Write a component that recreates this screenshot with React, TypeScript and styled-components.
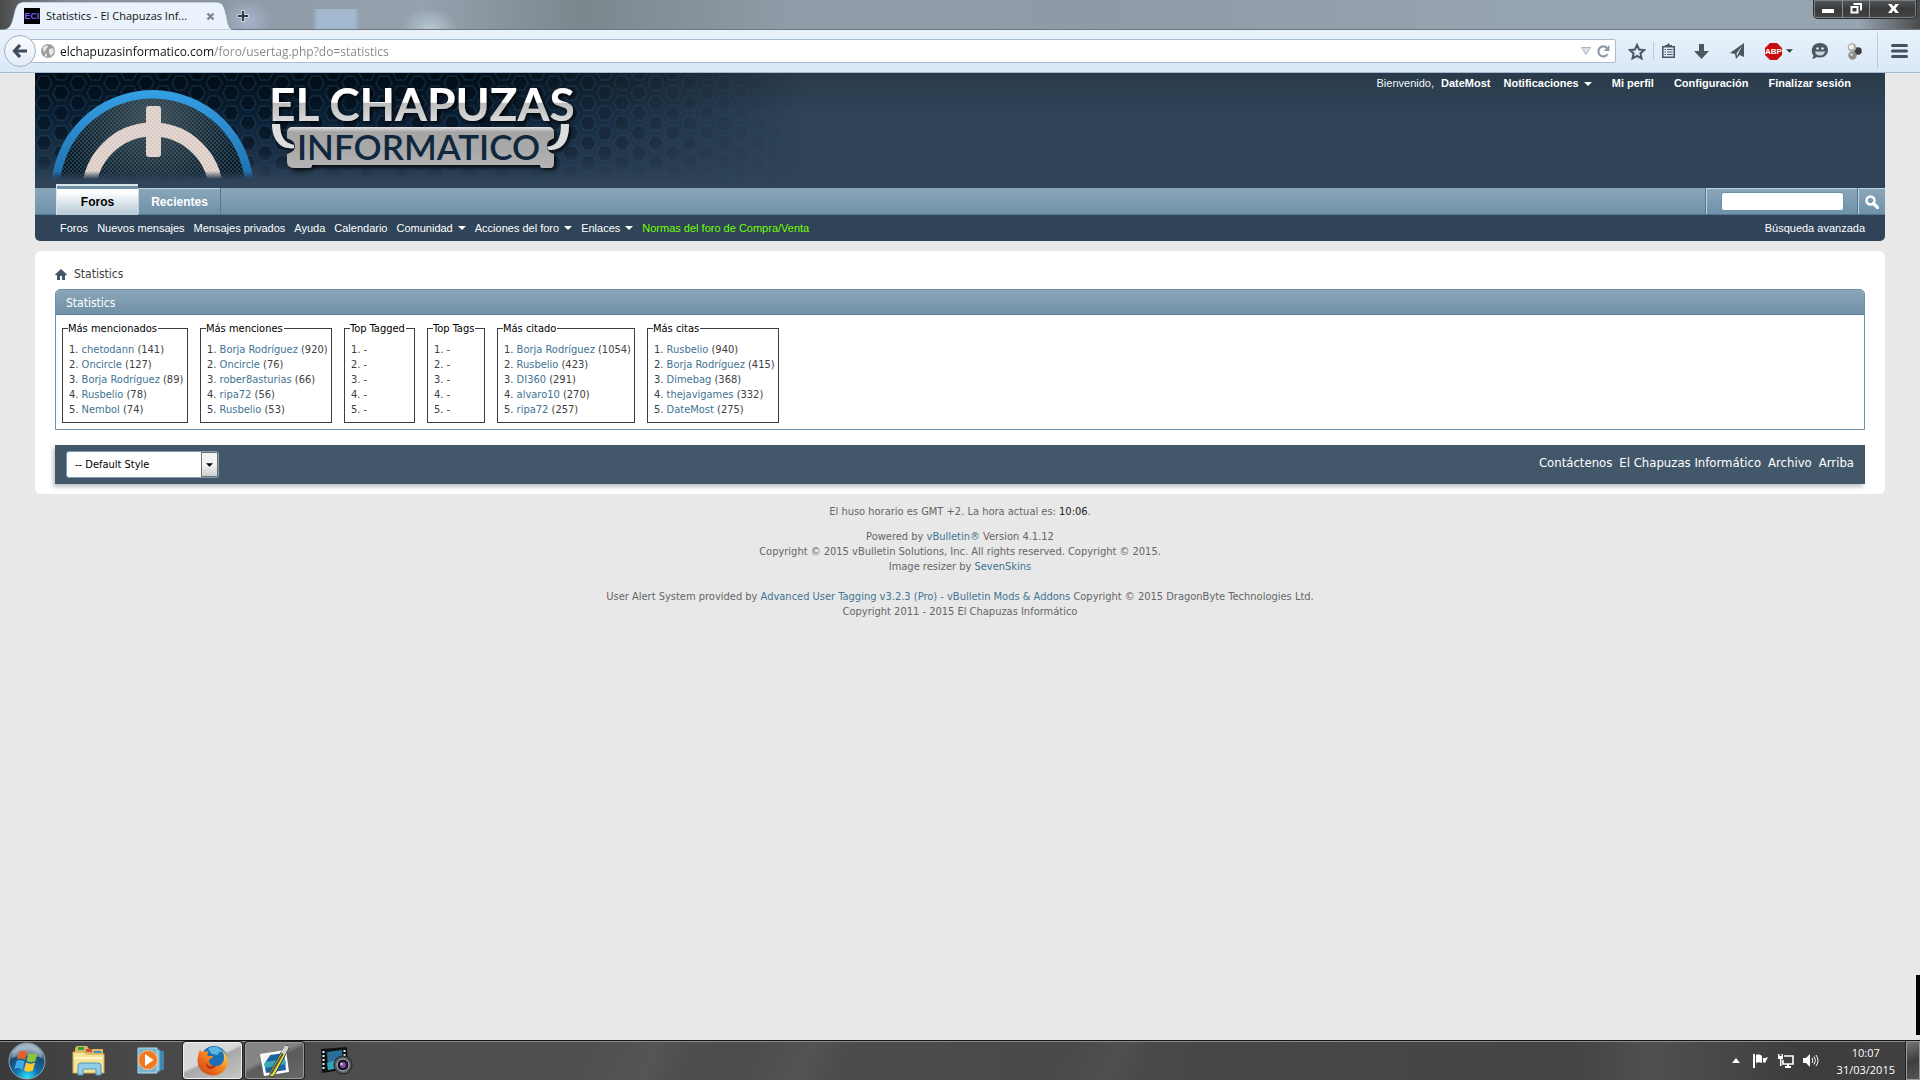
import React from 'react';
import styled, { createGlobalStyle } from 'styled-components';

const tahoma = '"DejaVu Sans Condensed", "Noto Sans", sans-serif';
const segoe = '"Open Sans", "Noto Sans", sans-serif';
const arial = '"Liberation Sans", Arial, sans-serif';

const GlobalStyle = createGlobalStyle`
  * { box-sizing: border-box; }
  body { margin: 0; background: #e8e8e8; color: #3e3e3e; font: 11px/15px ${tahoma}; }
  button { border: 0; padding: 0; background: none; color: inherit; font: inherit; }
  a { text-decoration: none; }
  svg { display: block; }
`;

const Desktop = styled.div`
  display: flex;
  flex-direction: column;
  min-height: 100vh;
`;

/* Browser window */

const TitleBar = styled.header`
  display: flex;
  align-items: flex-start;
  height: 30px;
  border-bottom: 1px solid #6b7781;
  background:
    radial-gradient(ellipse 26px 22px at 248px 20px, #a6b3cc 0, transparent 100%),
    linear-gradient(90deg, transparent 312px, #a3b9cf 318px, #a3b9cf 354px, transparent 360px) 0 9px no-repeat,
    radial-gradient(ellipse 28px 20px at 430px 28px, #b3c3cd 10%, transparent 100%),
    linear-gradient(90deg, #4b4b4b 0, #87929c 70px, #95a2ae 420px, #7c868d 580px, #909ca8 800px, #8e9aa5 1100px, #96a3b0 1500px, #96a3b0 calc(100% - 60px), #4a4a4a 100%);
`;
const Tab = styled.div`
  display: grid;
  flex: none;
  width: 234px;
  height: 30px;
  > * { grid-area: 1 / 1; }
`;
const TabContent = styled.div`
  display: flex;
  align-items: center;
  gap: 6px;
  height: 32px;
  padding: 0 19px 0 24px;
  color: #111;
  font: 11px/16px ${segoe};
`;
const Favicon = styled.span`
  width: 16px;
  height: 16px;
  background: #000;
  color: #7560ff;
  font: bold 9px/16px ${arial};
  text-align: center;
`;
const TabTitle = styled.span`
  flex: 1;
  white-space: nowrap;
`;
const NewTab = styled.button`
  height: 30px;
  padding: 2px 0 0 3px;
`;
const WindowButtons = styled.div`
  display: flex;
  width: 104px;
  height: 19px;
  margin: 0 3px 0 auto;
  border: 1px solid #2b2f33;
  border-top: 0;
  border-radius: 0 0 5px 5px;
  box-shadow: inset 0 0 0 1px #7b8085;
  background: linear-gradient(#55585b, #3a3a3a 50%, #444);
`;
const WindowButton = styled.button<{ $grow: number }>`
  display: grid;
  place-items: center;
  flex: ${p => p.$grow};
  padding-bottom: 2px;
  & + & { border-left: 1px solid #8b8f93; }
`;
const Toolbar = styled.div`
  display: flex;
  align-items: center;
  height: 43px;
  padding-left: 4px;
  border-bottom: 1px solid #a2bad4;
  background: linear-gradient(#e9f2fb, #dae8f8);
`;
const BackButton = styled.button`
  z-index: 1;
  display: grid;
  place-items: center;
  width: 32px;
  height: 32px;
  margin-right: -6px;
  border: 1px solid #a0b0c4;
  border-radius: 50%;
  background: linear-gradient(#fafcfe, #e3edf8);
`;
const AddressBar = styled.div`
  display: flex;
  flex: 1;
  align-items: center;
  height: 24px;
  padding: 0 5px 0 10px;
  border: 1px solid #aabccf;
  border-radius: 2px;
  background: #fff;
`;
const AddressInput = styled.input`
  flex: 1;
  height: 22px;
  margin: 0 5px;
  padding: 0;
  border: 0;
  outline: 0;
  background: linear-gradient(90deg, #111 154px, #858585 154px);
  background-clip: text;
  color: transparent;
  font: 12px/20px ${segoe};
`;
const ToolGroup = styled.div`
  display: flex;
  align-items: center;
  gap: 18px;
  height: 42px;
  padding: 0 12px 0 12px;
`;
const ToolButton = styled.button`
  display: flex;
  align-items: center;
  gap: 4px;
`;
const ToolDivider = styled.span<{ $tall?: boolean }>`
  width: 1px;
  height: ${p => (p.$tall ? 36 : 18)}px;
  margin: 0 ${p => (p.$tall ? -5 : -11)}px;
  background: #b9cadb;
`;

/* Forum page */

const Page = styled.div`
  flex: 1;
  padding: 0 35px;
`;
const Masthead = styled.header`
  display: flex;
  align-items: flex-start;
  justify-content: space-between;
  height: 115px;
  background: linear-gradient(#2a3a49, #2f4459 40px);
`;
const UserMenu = styled.nav`
  display: flex;
  gap: 20px;
  padding: 4px 34px 0 0;
  color: #f4f7f9;
  font: 11px/13px ${arial};
`;
const UserGroup = styled.span`
  display: flex;
  gap: 13px;
`;
const Welcome = styled.span`
  display: flex;
  gap: 7px;
`;
const UserLink = styled.a`
  display: flex;
  align-items: center;
  gap: 5px;
  color: #fff;
  font-weight: bold;
`;
const NavBar = styled.nav`
  display: flex;
  height: 27px;
  padding-left: 21px;
  border-bottom: 1px solid #56788f;
  background: linear-gradient(#8ba6ba, #6e92a9);
`;
const NavTab = styled.a<{ $active?: boolean }>`
  display: grid;
  place-items: center;
  width: 82px;
  height: ${p => (p.$active ? 31 : 26)}px;
  margin-top: ${p => (p.$active ? -4 : 0)}px;
  padding-top: ${p => (p.$active ? 4 : 1)}px;
  border: solid ${p => (p.$active ? '#dbe5ec' : '#c3d2dd')};
  border-width: ${p => (p.$active ? '2px 0 0 1px' : '1px 0 0 1px')};
  box-shadow: ${p => (p.$active ? 'inset 0 3px #7193a9' : '1px 0 #56788f')};
  background: ${p => (p.$active ? 'linear-gradient(#fff 20%, #b3c8d4)' : 'none')};
  color: ${p => (p.$active ? '#000' : '#fff')};
  font: bold 12px/15px ${arial};
`;
const SearchForm = styled.form`
  display: flex;
  margin-left: auto;
`;
const SearchField = styled.label`
  display: grid;
  align-items: center;
  width: 152px;
  padding: 0 14px;
  border: solid #c3d2dd;
  border-width: 1px 0 0 1px;
  box-shadow: -1px 0 #56788f;
`;
const SearchInput = styled.input`
  width: 100%;
  height: 19px;
  padding: 0 4px;
  border: 1px solid #6b91ab;
  border-radius: 3px;
  background: #fff;
`;
const SearchButton = styled.button`
  display: grid;
  place-items: center;
  width: 27px;
  border: solid #c3d2dd;
  border-width: 1px 0 0 1px;
  box-shadow: -1px 0 #56788f;
`;
const SubNav = styled.nav`
  display: flex;
  align-items: center;
  gap: 9px;
  height: 26px;
  padding: 0 20px 0 25px;
  border-radius: 0 0 5px 5px;
  background: #2f4459;
  font: 11px/14px ${arial};
`;
const SubLink = styled.a<{ $accent?: boolean; $end?: boolean }>`
  display: flex;
  align-items: center;
  gap: 5px;
  margin-left: ${p => (p.$end ? 'auto' : '0')};
  color: ${p => (p.$accent ? '#6fff00' : '#fff')};
`;
const Main = styled.main`
  margin-top: 10px;
  padding: 16px 20px 10px;
  border-radius: 6px;
  background: #fff;
`;
const Breadcrumb = styled.nav`
  display: flex;
  align-items: center;
  gap: 7px;
  height: 15px;
  margin-bottom: 7px;
  color: #3e3e3e;
  font-size: 12px;
`;
const Block = styled.section`
  border: 1px solid #6b91ab;
  border-radius: 5px 5px 0 0;
`;
const BlockHead = styled.h2`
  margin: 0;
  padding: 6px 10px 3px;
  border-bottom: 1px solid #56809b;
  border-radius: 4px 4px 0 0;
  background: linear-gradient(#8ba6b8, #7091a8);
  color: #fff;
  font: 12px/15px ${tahoma};
`;
const BlockBody = styled.div`
  display: flex;
  gap: 12px;
  padding: 6px;
`;
const RankBox = styled.fieldset<{ $width: number }>`
  min-width: ${p => p.$width}px;
  margin: 0;
  padding: 6px 2px 5px 5px;
  border: 1px solid #3e3e3e;
`;
const RankTitle = styled.legend`
  padding: 0 1px 0 0;
  color: #000;
  white-space: nowrap;
`;
const RankList = styled.ol`
  margin: 0;
  padding: 0 0 0 1px;
  list-style: none;
  white-space: nowrap;
`;
const TextLink = styled.a`
  color: #417394;
`;
const FooterBar = styled.footer`
  display: flex;
  align-items: center;
  justify-content: space-between;
  height: 39px;
  margin-top: 15px;
  padding: 0 11px;
  box-shadow: -2px 3px 4px #c5c5c5;
  background: #43576b;
`;
const StyleChooser = styled.label`
  display: grid;
  width: 153px;
  > * { grid-area: 1 / 1; }
`;
const StyleSelect = styled.select`
  appearance: none;
  height: 27px;
  padding: 0 20px 0 8px;
  border: 1px solid #7b9cb4;
  border-radius: 3px;
  background: #fff;
  color: #000;
  font: 11px/15px ${tahoma};
`;
const SelectArrow = styled.span`
  display: grid;
  place-items: center;
  justify-self: end;
  width: 17px;
  margin: 1px;
  border: 1px solid #707070;
  background: linear-gradient(#f3f3f3 50%, #cfcfcf);
  pointer-events: none;
`;
const FooterLinks = styled.nav`
  display: flex;
  gap: 7px;
  padding-bottom: 4px;
  font-size: 13px;
`;
const FooterLink = styled.a`
  color: #fff;
`;
const Credits = styled.div`
  padding-top: 10px;
  color: #666;
  text-align: center;
`;
const CreditText = styled.p`
  margin: 0 0 10px;
`;
const Time = styled.time`
  color: #222;
`;
const SideGadget = styled.div`
  position: fixed;
  right: 0;
  bottom: 45px;
  width: 4px;
  height: 60px;
  background: #050505;
`;

/* Taskbar */

const Taskbar = styled.footer`
  display: flex;
  align-items: stretch;
  height: 40px;
  border-top: 1px solid #141414;
  box-shadow: inset 0 1px #8d8d8d;
  background:
    linear-gradient(115deg, transparent 30%, #5b5b5b88 34%, transparent 36%, transparent 39%, #5a5a5a88 42%, transparent 44%, transparent 55%, #55555588 58%, transparent 60%),
    linear-gradient(90deg, #3a3a3a, #474747 5%, #505050 25%, #484848 60%, #444 82%, #505050 86%, #3d3d3d 94%, #414141);
`;
const StartButton = styled.button`
  display: grid;
  place-items: center;
  width: 57px;
  padding-right: 3px;
`;
const TaskButton = styled.button<{ $state?: 'active' | 'open' }>`
  display: grid;
  place-items: center;
  width: 59px;
  margin: 1px 1px 1px 2px;
  border: 1px solid ${p => (p.$state === 'active' ? '#f2f2f2' : p.$state ? '#9a9a9a' : 'transparent')};
  border-radius: 3px;
  box-shadow: ${p => (p.$state ? '0 0 0 1px #222' : 'none')};
  background: ${p =>
    p.$state === 'active'
      ? 'linear-gradient(155deg, #d8d8d8 45%, #a9a9a9 50%, #c5c5c5)'
      : p.$state
        ? 'linear-gradient(155deg, #858585 40%, #5c5c5c 50%, #686868)'
        : 'none'};
`;
const Tray = styled.div`
  display: flex;
  align-items: center;
  gap: 9px;
  margin-left: auto;
`;
const Clock = styled.div`
  padding: 0 2px 0 9px;
  color: #fff;
  font: 11px/17px ${segoe};
  text-align: center;
`;
const ShowDesktop = styled.button`
  width: 14px;
  height: 39px;
  border: 1px solid #999;
  box-shadow: -1px 0 #222;
  background: linear-gradient(160deg, #777, #3e3e3e 50%, #555);
`;

const Caret = ({ color = '#fff', w = 8 }: { color?: string; w?: number }) => (
  <svg width={w} height="4" viewBox="0 0 8 4" aria-hidden="true"><path d="M0 0h8L4 4z" fill={color} /></svg>
);

const SiteLogo = () => (
  <svg width="770" height="115" viewBox="0 0 770 115" role="img" aria-label="El Chapuzas Informatico">
    <defs>
      <pattern id="hex" width="34" height="20" patternUnits="userSpaceOnUse">
        <g fill="#010b15" fillOpacity=".5" stroke="#38597a" strokeOpacity=".3" strokeWidth="1.500">
          <path d="M5 3h8l4 7-4 7H5l-4-7z" />
          <path d="M22-7h8l4 7-4 7h-8l-4-7z" />
          <path d="M22 13h8l4 7-4 7h-8l-4-7z" />
        </g>
      </pattern>
      <linearGradient id="night" x1="0" y1="0" x2="0" y2="1">
        <stop offset="0" stopColor="#020d18" /><stop offset=".4" stopColor="#0a2238" /><stop offset=".75" stopColor="#1d334a" /><stop offset=".95" stopColor="#2f4459" />
      </linearGradient>
      <linearGradient id="fadeX"><stop offset=".58" stopColor="#fff" /><stop offset="1" stopColor="#000" /></linearGradient>
      <linearGradient id="fadeY" x1="0" y1="0" x2="0" y2="1"><stop offset=".6" stopColor="#fff" /><stop offset=".93" stopColor="#000" /></linearGradient>
      <linearGradient id="fadeLogo" gradientUnits="userSpaceOnUse" x1="0" y1="98" x2="0" y2="106"><stop offset="0" stopColor="#fff" /><stop offset="1" stopColor="#000" /></linearGradient>
      <mask id="mx"><rect width="770" height="115" fill="url(#fadeX)" /></mask>
      <mask id="my"><rect width="770" height="115" fill="url(#fadeY)" /></mask>
      <mask id="ml"><rect width="770" height="115" fill="url(#fadeLogo)" /></mask>
      <linearGradient id="blue" x1="0" y1="0" x2="0" y2="1"><stop offset="0" stopColor="#35a0e6" /><stop offset=".5" stopColor="#1d69a6" /></linearGradient>
      <radialGradient id="dial" cx=".5" cy=".1" r=".5"><stop offset="0" stopColor="#47494b" /><stop offset="1" stopColor="#10171d" /></radialGradient>
      <pattern id="mesh" width="4" height="4" patternUnits="userSpaceOnUse"><path d="M0 0l4 4M4 0L0 4" stroke="#2d7da9" strokeWidth=".6" strokeOpacity=".7" /></pattern>
      <pattern id="meshWarm" width="4" height="4" patternUnits="userSpaceOnUse"><rect width="4" height="4" fill="#dedada" /><path d="M0 0l4 4M4 0L0 4" stroke="#e5a585" strokeWidth=".5" strokeOpacity=".7" /></pattern>
      <linearGradient id="chrome" gradientUnits="userSpaceOnUse" x1="0" y1="14" x2="0" y2="50">
        <stop offset="0" stopColor="#fff" /><stop offset=".42" stopColor="#fff" /><stop offset=".46" stopColor="#bdbdbd" /><stop offset="1" stopColor="#dedede" />
      </linearGradient>
      <linearGradient id="plate" x1="0" y1="0" x2="0" y2="1">
        <stop offset="0" stopColor="#e6e3e6" /><stop offset=".12" stopColor="#a5a5a5" /><stop offset=".6" stopColor="#aaa" /><stop offset="1" stopColor="#b5b5b5" />
      </linearGradient>
      <filter id="drop" x="-10%" y="-20%" width="120%" height="150%"><feDropShadow dx="2" dy="2" stdDeviation="2" floodColor="#000" floodOpacity=".9" /></filter>
    </defs>
    <g mask="url(#mx)">
      <rect width="770" height="115" fill="url(#night)" />
      <rect width="770" height="115" fill="url(#hex)" mask="url(#my)" />
    </g>
    <g mask="url(#ml)">
      <circle cx="117.500" cy="118.500" r="101.500" fill="url(#blue)" />
      <circle cx="117.500" cy="118.500" r="93" fill="url(#dial)" />
      <circle cx="117.500" cy="118.500" r="93" fill="url(#mesh)" />
      <circle cx="117.500" cy="120" r="63.500" fill="none" stroke="url(#meshWarm)" strokeWidth="14" />
      <rect x="111" y="33" width="15" height="51" rx="3" fill="url(#meshWarm)" />
    </g>
    <g filter="url(#drop)">
      <path d="M237 51h8c0 12 4 19 14 21v3c-14 2-22-9-22-24zM526 51h8c0 16-5 26-20 26l-2-3c10-1 14-8 14-23z" fill="#dedede" />
      <path d="M257 54h257a5 5 0 0 1 5 5v6c-4 2-7 3-7 8s3 7 7 8v8q0 6-4 6h-7q-3 0-3-3H277q0 3-3 3h-13q-9 0-9-6v-8c4-1 8-3 8-8s-4-6-8-8v-6a5 5 0 0 1 5-5z" fill="url(#plate)" />
      <text x="234" y="48" fontFamily="Lato" fontWeight="700" fontSize="46" fill="url(#chrome)">EL CHAPUZAS</text>
    </g>
    <text x="262" y="87" fontFamily="Lato" fontWeight="600" fontSize="35" fill="#10283d">INFORMATICO</text>
  </svg>
);

type Entry = [string, number] | null;
const blank: Entry[] = [null, null, null, null, null];
const rankings: { title: string; width: number; entries: Entry[] }[] = [
  { title: 'Más mencionados', width: 126, entries: [['chetodann', 141], ['Oncircle', 127], ['Borja Rodríguez', 89], ['Rusbelio', 78], ['Nembol', 74]] },
  { title: 'Más menciones', width: 132, entries: [['Borja Rodríguez', 920], ['Oncircle', 76], ['rober8asturias', 66], ['ripa72', 56], ['Rusbelio', 53]] },
  { title: 'Top Tagged', width: 71, entries: blank },
  { title: 'Top Tags', width: 58, entries: blank },
  { title: 'Más citado', width: 138, entries: [['Borja Rodríguez', 1054], ['Rusbelio', 423], ['DI360', 291], ['alvaro10', 270], ['ripa72', 257]] },
  { title: 'Más citas', width: 132, entries: [['Rusbelio', 940], ['Borja Rodríguez', 415], ['Dimebag', 368], ['thejavigames', 332], ['DateMost', 275]] },
];

const subLinks: { label: string; menu?: boolean; accent?: boolean }[] = [
  { label: 'Foros' },
  { label: 'Nuevos mensajes' },
  { label: 'Mensajes privados' },
  { label: 'Ayuda' },
  { label: 'Calendario' },
  { label: 'Comunidad', menu: true },
  { label: 'Acciones del foro', menu: true },
  { label: 'Enlaces', menu: true },
  { label: 'Normas del foro de Compra/Venta', accent: true },
];

const Browser = () => (
  <>
    <TitleBar>
      <Tab>
        <svg width="234" height="30" viewBox="0 0 234 30" aria-hidden="true">
          <path d="M0 30c9 0 11-4 13-12l2-8c2-6 4-8 10-8h190c6 0 8 2 10 8l2 8c1 8 3 12 7 12z" fill="#eaf2fb" stroke="#77838e" strokeOpacity=".6" />
        </svg>
        <TabContent>
          <Favicon aria-hidden="true">ECI</Favicon>
          <TabTitle>Statistics - El Chapuzas Inf...</TabTitle>
          <button type="button" aria-label="Cerrar pestaña">
            <svg width="9" height="9" viewBox="0 0 9 9"><path d="M1.500 1.500l6 6m0-6l-6 6" stroke="#7d8791" strokeWidth="2.400" /></svg>
          </button>
        </TabContent>
      </Tab>
      <NewTab type="button" aria-label="Nueva pestaña">
        <svg width="12" height="12" viewBox="0 0 12 12"><path d="M6 0v12M0 6h12" stroke="#f1f4f7" strokeWidth="4" opacity=".5" /><path d="M6 1v10M1 6h10" stroke="#333d49" strokeWidth="2" /></svg>
      </NewTab>
      <WindowButtons>
        <WindowButton type="button" $grow={29} aria-label="Minimizar">
          <svg width="12" height="10"><path d="M0 6h12v4H0z" fill="#fff" /></svg>
        </WindowButton>
        <WindowButton type="button" $grow={27} aria-label="Restaurar">
          <svg width="12" height="11" viewBox="0 0 12 11"><path d="M3.500 1h7.500v6.500M1.500 4h6v5.500h-6z" fill="none" stroke="#fff" strokeWidth="2" /></svg>
        </WindowButton>
        <WindowButton type="button" $grow={47} aria-label="Cerrar">
          <svg width="11" height="9" viewBox="0 0 11 9"><path d="M0 0h3.500l2 2.500 2-2.500H11L7.500 4.500 11 9H7.500l-2-2.500-2 2.500H0l3.500-4.500z" fill="#fff" /></svg>
        </WindowButton>
      </WindowButtons>
    </TitleBar>
    <Toolbar>
      <BackButton type="button" aria-label="Atrás">
        <svg width="16" height="14" viewBox="0 0 16 14"><path d="M8 1L2.500 7 8 13M3 7h12" fill="none" stroke="#3e4b59" strokeWidth="3.200" /></svg>
      </BackButton>
      <AddressBar>
        <svg width="14" height="14" viewBox="0 0 14 14" aria-hidden="true">
          <circle cx="7" cy="7" r="7" fill="#9b9b9b" />
          <path d="M2 3l4-2 1 2-2 2-1 3-2-1zM8 5l4-1 1 4-3 4-2-3zM4 9l2 1v3l-2-1z" fill="#e5e5e5" />
        </svg>
        <AddressInput aria-label="Dirección" defaultValue="elchapuzasinformatico.com/foro/usertag.php?do=statistics" />
        <ToolButton type="button" aria-label="Historial">
          <svg width="10" height="8"><path d="M.5.500h9L5 7.500z" fill="#dbe0e5" stroke="#a9b4be" /></svg>
        </ToolButton>
        <svg width="6" height="1" aria-hidden="true" />
        <ToolButton type="button" aria-label="Recargar">
          <svg width="13" height="13" viewBox="0 0 13 13"><path d="M10.500 9.200A5 5 0 1 1 10 3" fill="none" stroke="#8d99a6" strokeWidth="2.200" /><path d="M12.500 0v6h-6z" fill="#8d99a6" /></svg>
        </ToolButton>
      </AddressBar>
      <ToolGroup>
        <ToolButton type="button" aria-label="Marcador">
          <svg width="18" height="17" viewBox="0 0 18 17"><path d="M9 2l2.100 4.600 5 .5-3.700 3.300 1.100 5L9 12.800l-4.500 2.600 1.100-5L1.900 7.100l5-.5z" fill="none" stroke="#4c5762" strokeWidth="2" /></svg>
        </ToolButton>
        <ToolDivider />
        <ToolButton type="button" aria-label="Marcadores">
          <svg width="15" height="16" viewBox="0 0 15 16"><path d="M1.800 3.800h11.400v10.400H1.800z" fill="none" stroke="#4c5762" strokeWidth="1.600" rx="2" /><path d="M4 4V2h2l1.500-2L9 2h2v2z" fill="#4c5762" /><path d="M3.500 6.500h1.500M6 6.500h5.500M3.500 9h1.500M6 9h5.500M3.500 11.500h1.500M6 11.500h5.500" stroke="#4c5762" strokeWidth="1.200" /></svg>
        </ToolButton>
        <ToolButton type="button" aria-label="Descargas">
          <svg width="15" height="15" viewBox="0 0 15 15"><path d="M5 0h5v7h5l-7.500 8L0 7h5z" fill="#4c5762" /></svg>
        </ToolButton>
        <ToolButton type="button" aria-label="Compartir">
          <svg width="20" height="16" viewBox="0 0 20 16"><path d="M17 0v14l-4.500-2L9 16l-1-5-5-1zM15 3L9.500 10.500l.5 2.500z" fillRule="evenodd" fill="#4c5762" /></svg>
        </ToolButton>
        <ToolButton type="button" aria-label="Adblock Plus">
          <svg width="17" height="17" viewBox="0 0 17 17"><path d="M5 0h7l5 5v7l-5 5H5l-5-5V5z" fill="#c70d0d" /><text x="8.500" y="11" textAnchor="middle" fontFamily="Liberation Sans" fontWeight="bold" fontSize="8" fill="#fff">ABP</text></svg>
          <Caret color="#333c46" w={7} />
        </ToolButton>
        <ToolButton type="button" aria-label="Hello">
          <svg width="17" height="16" viewBox="0 0 17 16"><path d="M9 0c5 0 8 3 8 7s-3 7.500-8 7.500c-1 0-2 0-3-.500C4.500 15 3 16 1 15.500c1-1 1.500-2 1.500-3C1 11 .8 9 .8 7.500.8 3 4 0 9 0z" fill="#4c5762" /><path d="M4 8.500h10c-.5 2.500-2 4-5 4s-4.500-1.500-5-4z" fill="#c9d4df" /><circle cx="6.500" cy="5.500" r="1.200" fill="#e2ecf7" /><circle cx="11.500" cy="5.500" r="1.200" fill="#e2ecf7" /></svg>
        </ToolButton>
        <ToolButton type="button" aria-label="Complemento">
          <svg width="18" height="17" viewBox="0 0 18 17"><circle cx="12" cy="8" r="3.800" fill="#3d3d3d" /><circle cx="6.500" cy="12.500" r="4.200" fill="#8d8d85" /><circle cx="5.500" cy="11.500" r="1.500" fill="#ccc" /><circle cx="6" cy="4.500" r="4.300" fill="#aaa9a3" /><circle cx="5.500" cy="4" r="2.600" fill="#eee" /></svg>
        </ToolButton>
        <ToolDivider $tall />
        <ToolButton type="button" aria-label="Menú">
          <svg width="17" height="14" viewBox="0 0 17 14"><path d="M1.500 1.500h14M1.500 7h14M1.500 12.500h14" stroke="#46515d" strokeWidth="3" strokeLinecap="round" /></svg>
        </ToolButton>
      </ToolGroup>
    </Toolbar>
  </>
);

const Forum = () => (
  <Page>
    <Masthead>
      <a href="#inicio"><SiteLogo /></a>
      <UserMenu>
        <UserGroup>
          <Welcome>Bienvenido, <UserLink href="#u">DateMost</UserLink></Welcome>
          <UserLink href="#n">Notificaciones <Caret /></UserLink>
        </UserGroup>
        <UserLink href="#p">Mi perfil</UserLink>
        <UserLink href="#c">Configuración</UserLink>
        <UserLink href="#s">Finalizar sesión</UserLink>
      </UserMenu>
    </Masthead>
    <NavBar>
      <NavTab href="#foros" $active>Foros</NavTab>
      <NavTab href="#recientes">Recientes</NavTab>
      <SearchForm>
        <SearchField><SearchInput type="text" aria-label="Buscar" /></SearchField>
        <SearchButton type="button" aria-label="Buscar">
          <svg width="14" height="14" viewBox="0 0 14 14"><circle cx="5.500" cy="5.500" r="4" fill="none" stroke="#fff" strokeWidth="2.400" /><path d="M8.500 8.500l4 4" stroke="#fff" strokeWidth="3.200" strokeLinecap="round" /></svg>
        </SearchButton>
      </SearchForm>
    </NavBar>
    <SubNav>
      {subLinks.map(l => (
        <SubLink key={l.label} href="#sub" $accent={l.accent}>{l.label}{l.menu && <Caret />}</SubLink>
      ))}
      <SubLink href="#avanzada" $end>Búsqueda avanzada</SubLink>
    </SubNav>
    <Main>
      <Breadcrumb>
        <svg width="12" height="11" viewBox="0 0 12 11" aria-hidden="true"><path d="M6 0l6 5.500-1 1-1-.5v5H7V7H5v4H2V6l-1 .5-1-1z" fill="#43576b" /></svg>
        <span>Statistics</span>
      </Breadcrumb>
      <Block>
        <BlockHead>Statistics</BlockHead>
        <BlockBody>
          {rankings.map(r => (
            <RankBox key={r.title} $width={r.width}>
              <RankTitle>{r.title}</RankTitle>
              <RankList>
                {r.entries.map((e, i) => (
                  <li key={i}>{i + 1}. {e ? <><TextLink href="#user">{e[0]}</TextLink> ({e[1]})</> : '-'}</li>
                ))}
              </RankList>
            </RankBox>
          ))}
        </BlockBody>
      </Block>
      <FooterBar>
        <StyleChooser>
          <StyleSelect aria-label="Estilo"><option>-- Default Style</option></StyleSelect>
          <SelectArrow><Caret color="#000" w={7} /></SelectArrow>
        </StyleChooser>
        <FooterLinks>
          <FooterLink href="#contacto">Contáctenos</FooterLink>
          <FooterLink href="#inicio">El Chapuzas Informático</FooterLink>
          <FooterLink href="#archivo">Archivo</FooterLink>
          <FooterLink href="#arriba">Arriba</FooterLink>
        </FooterLinks>
      </FooterBar>
    </Main>
    <Credits>
      <CreditText>El huso horario es GMT +2. La hora actual es: <Time>10:06</Time>.</CreditText>
      <CreditText>
        Powered by <TextLink href="#vb">vBulletin®</TextLink> Version 4.1.12<br />
        Copyright © 2015 vBulletin Solutions, Inc. All rights reserved. Copyright © 2015.<br />
        Image resizer by <TextLink href="#ss">SevenSkins</TextLink><br /><br />
        User Alert System provided by <TextLink href="#tag">Advanced User Tagging v3.2.3 (Pro)</TextLink> - <TextLink href="#mods">vBulletin Mods &amp; Addons</TextLink> Copyright © 2015 DragonByte Technologies Ltd.<br />
        Copyright 2011 - 2015 El Chapuzas Informático
      </CreditText>
    </Credits>
    <SideGadget />
  </Page>
);

const WindowsBar = () => (
  <Taskbar>
    <StartButton type="button" aria-label="Inicio">
      <svg width="38" height="38" viewBox="0 0 38 38">
        <defs><radialGradient id="orb" cx=".5" cy=".95" r=".8"><stop offset="0" stopColor="#2fe3fb" /><stop offset=".4" stopColor="#1173ae" /><stop offset=".8" stopColor="#1b4a70" /><stop offset="1" stopColor="#7e96a8" /></radialGradient></defs>
        <circle cx="19" cy="19" r="18" fill="url(#orb)" stroke="#8fa5b5" />
        <path d="M4 16A15 14 0 0 1 34 16c-9-3-21-3-30 0z" fill="#fff" opacity=".3" />
        <path d="M11 10c3-2 5-1 8 0l-2 8c-3-2-5-2-8-.5z" fill="#e8602c" />
        <path d="M20.500 10.500c3 2 6 2 9 .5l-2 8c-3 1.500-6 1.500-9 0z" fill="#8cc63e" />
        <path d="M8.500 19c3-1.500 5-1 8 .5l-2 8c-3-1.500-5-2-8-.5z" fill="#3fa9e8" />
        <path d="M18 20.500c3 1.500 6 1.500 9 0l-2 8c-3 1.500-6 1.500-9 0z" fill="#fdc62f" />
      </svg>
    </StartButton>
    <TaskButton type="button" aria-label="Explorador">
      <svg width="34" height="31" viewBox="0 0 34 31">
        <path d="M3 3l2-2h10l2 3h14v23H3z" fill="#d9b95f" /><path d="M6 2h6v3H6z" fill="#2da13c" /><path d="M14 4h6v3h-6z" fill="#d64d35" /><path d="M22 6h7v2h-7z" fill="#3f8fd0" />
        <path d="M1 7h11l2 2h18v19H1z" fill="#f7e397" stroke="#cdae56" /><path d="M2 13h29" stroke="#fff6c9" strokeWidth="2" />
        <path d="M6 30V21q0-3 3-3h17q3 0 3 3v9h-5v-6H11v6z" fill="#92cde8" stroke="#4f97bd" />
      </svg>
    </TaskButton>
    <TaskButton type="button" aria-label="Reproductor">
      <svg width="28" height="27" viewBox="0 0 28 27">
        <path d="M8 2l19 2v19l-19 2z" fill="#3f87b1" /><path d="M5 2l18 1v21l-18 2z" fill="#8fc3de" stroke="#4a8bb3" /><path d="M1 1h19v25H1z" fill="#79b3d3" stroke="#b8dbec" />
        <circle cx="11" cy="13" r="9.500" fill="#f07a1d" stroke="#ffc38a" /><path d="M8 7l8.500 6L8 19z" fill="#fff" />
      </svg>
    </TaskButton>
    <TaskButton type="button" $state="active" aria-label="Firefox">
      <svg width="32" height="32" viewBox="0 0 32 32">
        <defs><linearGradient id="fox" x1="0" y1="1" x2="1" y2="0"><stop offset="0" stopColor="#cf3414" /><stop offset=".55" stopColor="#f58320" /><stop offset="1" stopColor="#ffe24a" /></linearGradient></defs>
        <circle cx="17" cy="14" r="13" fill="#1b6fb5" /><path d="M11 4c5-4 12-2 15 3-3-1-5 0-5 3l-6-1z" fill="#57b6e4" />
        <path d="M3 5c1 1 2 2 3 2 2-1 4-1 6 0-2 1-2 3-1 4h5c0 2-3 3-4 4 0 5 4 7 8 6 7-1 9-9 5-16 6 5 7 13 4 18-5 9-18 10-25 2C-1 19 0 12 3 5z" fill="url(#fox)" />
        <path d="M9 17c1 4 6 6 10 3-2 6-11 5-10-3z" fill="#b53112" />
      </svg>
    </TaskButton>
    <TaskButton type="button" $state="open" aria-label="Editor">
      <svg width="32" height="32" viewBox="0 0 32 32">
        <path d="M1 9l26-4 3 22-25 4z" fill="#fff" /><path d="M4 11l21-3 2 17-20 3z" fill="#1764a7" /><path d="M5 17l21-3 1 5-21 4z" fill="#39a7b7" /><path d="M3 10l9-1-7 10z" fill="#f5f5ee" />
        <path d="M24 4l5-4 1 3-15 28-4 1v-5z" fill="#e6e630" stroke="#404040" /><path d="M27 3L12 29" stroke="#555" strokeWidth="2" /><path d="M26 1l-4 6 4 3 4-9z" fill="#d0d0d0" />
      </svg>
    </TaskButton>
    <TaskButton type="button" aria-label="Cámara">
      <svg width="32" height="28" viewBox="0 0 32 28">
        <path d="M0 2l26-2 1 22-26 4z" fill="#101215" /><path d="M6 5l15-2 1 17-15 3z" fill="#2b6f98" /><path d="M6 16l15-5 1 9-15 3z" fill="#2fa4b6" />
        <path d="M2.500 4v20M23.500 3v17" stroke="#e9eef2" strokeWidth="2" strokeDasharray="2 2" />
        <circle cx="22" cy="18" r="9" fill="#55585c" stroke="#222" /><circle cx="22" cy="18" r="6" fill="#131520" stroke="#c4c7ca" /><circle cx="22" cy="18" r="3" fill="#8b4ba5" /><circle cx="20.500" cy="17" r="1.200" fill="#f1c7e5" />
      </svg>
    </TaskButton>
    <Tray>
      <button type="button" aria-label="Iconos ocultos"><svg width="8" height="5"><path d="M0 5l4-5 4 5z" fill="#fff" /></svg></button>
      <svg width="20" height="16" viewBox="0 0 20 16" role="img" aria-label="Centro de actividades"><path d="M5 1v14" stroke="#fff" strokeWidth="2" /><path d="M7 2c3-1 5 0 6 1v7c-2-1-4-1-6 0zM14 5c2 0 3 0 5-1l-3 6-2-1z" fill="#fff" /></svg>
      <svg width="16" height="15" viewBox="0 0 16 15" role="img" aria-label="Red"><path d="M6 3h9v8H5V7" fill="none" stroke="#fff" strokeWidth="1.600" /><path d="M0 1h1.500v2h2V1H5v5H3.500v7H2V6H0zM9 11h2v2h2v2H7v-2h2z" fill="#fff" /></svg>
      <svg width="16" height="15" viewBox="0 0 16 15" role="img" aria-label="Volumen"><path d="M0 5h3l4-4v13l-4-4H0z" fill="#fff" /><path d="M9 5q1.500 2.500 0 5M11 3.500q3 4 0 8M13 2q4 5.500 0 11" fill="none" stroke="#fff" /></svg>
      <Clock><div>10:07</div><div>31/03/2015</div></Clock>
      <ShowDesktop type="button" aria-label="Mostrar escritorio" />
    </Tray>
  </Taskbar>
);

export default function App() {
  return (
    <Desktop>
      <GlobalStyle />
      <Browser />
      <Forum />
      <WindowsBar />
    </Desktop>
  );
}
